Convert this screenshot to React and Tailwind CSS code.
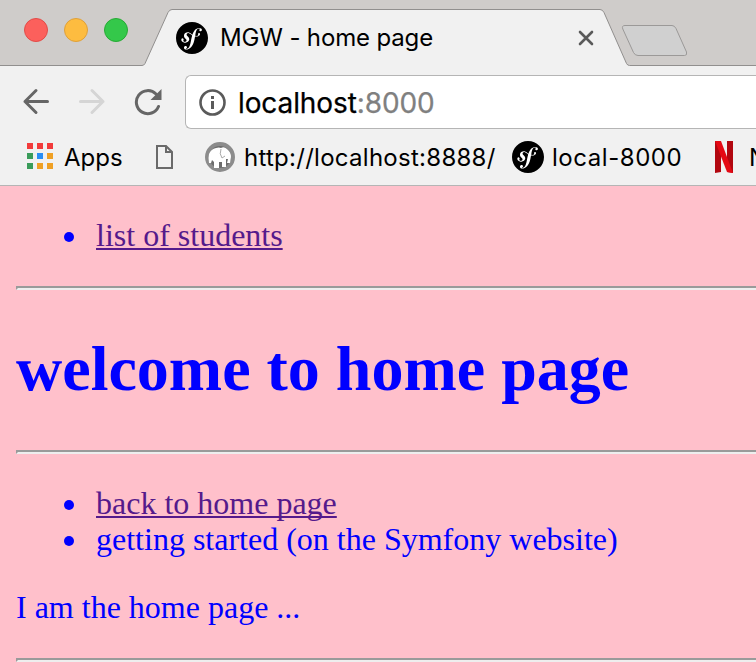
import React from 'react';
import { SiSymfony } from 'react-icons/si';

const appColors = [
  'bg-[#f23b3b]', 'bg-[#f23b3b]', 'bg-[#f23b3b]',
  'bg-[#3a9c5a]', 'bg-[#2a8ef5]', 'bg-[#efa024]',
  'bg-[#3a9c5a]', 'bg-[#efa024]', 'bg-[#efa024]',
];

function SymfonyIcon() {
  return (
    <span className="flex size-8 shrink-0 rounded-full bg-[radial-gradient(circle,white_60%,transparent_61%)]">
      <SiSymfony className="size-8 text-black" />
    </span>
  );
}

function TabStrip() {
  return (
    <header className="relative h-[66px] bg-[#cfccca]">
      <svg className="absolute inset-0" width="756" height="66" viewBox="0 0 756 66" fill="none">
        <path
          d="M-2 65.5H142Q144 65.5 145 63.5L168 12.5Q169.500 9.500 172 9.500H600Q602.500 9.500 604 12.500L626.500 63.500Q627.500 65.500 629.500 65.500H758V68H-2Z"
          fill="#f1f1f1" stroke="#918f8e"
        />
        <path
          d="M625 25.500H672Q674.500 25.500 676 28.500L686.500 52Q687.500 55.500 684.500 55.500H638Q635 55.500 633.500 52.500L622.800 29Q621.500 25.500 625 25.500Z"
          fill="#d0d0d0" stroke="#9b9998"
        />
      </svg>
      <div className="relative flex h-full">
        <div className="flex gap-4 pl-6 pt-[18px]">
          <span className="size-6 rounded-full border border-[#e24b48] bg-[#fc605c]" />
          <span className="size-6 rounded-full border border-[#dfa03a] bg-[#fdbc40]" />
          <span className="size-6 rounded-full border border-[#27aa35] bg-[#34c84a]" />
        </div>
        <div className="ml-12 flex w-[420px] items-center pt-[10px]">
          <SymfonyIcon />
          <span className="ml-3 w-[340px] whitespace-nowrap text-[24px] leading-8 tracking-[-0.15px]">MGW - home page</span>
          <svg className="ml-[18px] shrink-0" width="16" height="16" viewBox="0 0 16 16" fill="none" stroke="#5a5a5a" strokeWidth="2.600" strokeLinecap="round">
            <path d="M2 2L14 14M14 2L2 14" />
          </svg>
        </div>
      </div>
    </header>
  );
}

function Toolbar() {
  return (
    <div className="flex h-[63px] items-center pt-[9px]">
      <svg className="ml-[22px] shrink-0" width="28" height="28" viewBox="0 0 28 28" fill="none" stroke="#666" strokeWidth="3" strokeLinecap="round" strokeLinejoin="round">
        <path d="M25.500 13.500H3M14 2.500L3 13.500L14 24.500" />
      </svg>
      <svg className="ml-7 shrink-0" width="28" height="28" viewBox="0 0 28 28" fill="none" stroke="#d5d5d5" strokeWidth="3" strokeLinecap="round" strokeLinejoin="round">
        <path d="M2.500 13.500H25M14 2.500L25 13.500L14 24.500" />
      </svg>
      <svg className="ml-7 shrink-0" width="30" height="30" viewBox="0 0 30 30" fill="none">
        <path d="M22 7A11.500 11.500 0 1 0 24.500 19.500" stroke="#666" strokeWidth="3" strokeLinecap="round" />
        <path d="M27.500 2V13H16.500Z" fill="#666" />
      </svg>
      <div className="ml-[21px] flex h-[54px] flex-1 items-center rounded-l-md border border-r-0 border-[#b5b5b5] bg-white pl-[13px]">
        <svg className="shrink-0" width="28" height="28" viewBox="0 0 28 28" fill="none">
          <circle cx="13.500" cy="14.500" r="12" stroke="#5a5a5a" strokeWidth="2.600" />
          <path d="M12 8h3v3h-3zM12 13h3v8h-3z" fill="#5a5a5a" />
        </svg>
        <span className="ml-[11px] mt-[2px] whitespace-nowrap text-[28px] leading-9 tracking-[-0.1px] [-webkit-text-stroke:0.25px]">
          localhost<span className="text-[#808080]">:8000</span>
        </span>
      </div>
    </div>
  );
}

function BookmarksBar() {
  return (
    <div className="flex h-[57px] items-center overflow-hidden border-b border-[#b5b5b5] whitespace-nowrap text-[24px] leading-8">
      <span className="ml-[27px] grid shrink-0 grid-cols-3 gap-1 -mt-[2px]">
        {appColors.map((color, i) => (
          <span key={i} className={`size-[6px] ${color}`} />
        ))}
      </span>
      <span className="ml-[11px] mt-[2px] w-[59px] shrink-0">Apps</span>
      <svg className="ml-8 shrink-0" width="18" height="26" viewBox="0 0 18 26" fill="none" stroke="#6a6a6a" strokeWidth="2">
        <path d="M2 2H11L17 8V24H2ZM11 2V8H17" />
      </svg>
      <svg className="ml-[31px] shrink-0" width="32" height="32" viewBox="0 0 32 32">
        <circle cx="16" cy="16" r="13" fill="#6c6c6c" stroke="#8c8c8c" strokeWidth="4" />
        <path d="M5 13Q7 8 12 7Q15 6 17 7Q20 5 23 8Q27 11 27 16L26 22H23L24 18L22 18V26H18V21H15V27H10V21L8 19L7 22H5Q4 17 5 13Z" fill="white" />
        <path d="M17 8Q15 13 18 17L21 15" fill="none" stroke="#aaa" strokeWidth="1" />
      </svg>
      <span className="ml-2 mt-[2px] w-[252px] shrink-0 tracking-[0.27px]">http://localhost:8888/</span>
      <span className="ml-4 flex shrink-0"><SymfonyIcon /></span>
      <span className="ml-2 mt-[2px] w-[130px] shrink-0 tracking-[0.55px]">local-8000</span>
      <svg className="ml-[33px] shrink-0" width="18" height="32" viewBox="0 0 18 32">
        <path d="M0 0H6V31L0 32ZM12 0H18V32L12 31Z" fill="#b20710" />
        <path d="M0 0H6L18 32L12 31Z" fill="#e50914" />
      </svg>
      <span className="ml-4 mt-[2px] shrink-0">N</span>
    </div>
  );
}

function ListItem({ children }) {
  return (
    <li className="flex h-9 items-center pl-12">
      <span className="mr-[22px] mt-[2px] size-[10px] rounded-full bg-[#0000ff]" />
      <span className="-mt-[2px]">{children}</span>
    </li>
  );
}

function Rule() {
  return <hr className="h-1 border-2 border-r-0 border-t-[#9a9a9a] border-b-[#eeeeee] border-l-[#9a9a9a]" />;
}

const linkClass =
  'text-[#551a8b] underline decoration-2 underline-offset-[2px] [text-decoration-skip-ink:none]';

export default function App() {
  return (
    <div className="h-[662px] w-[756px] overflow-hidden bg-[#f1f1f1] font-['Inter','Liberation_Sans',sans-serif] text-black">
      <TabStrip />
      <Toolbar />
      <BookmarksBar />
      <main className="h-[476px] overflow-hidden bg-[#ffc0cb] pl-4 pt-8 font-['Liberation_Serif',serif] text-[32px] leading-9 text-[#0000ff]">
        <ul className="mb-8">
          <ListItem><a className={linkClass}>list of students</a></ListItem>
        </ul>
        <Rule />
        <h1 className="mt-[42px] mb-[44px] text-[64px] leading-[74px] font-bold">welcome to home page</h1>
        <Rule />
        <ul className="my-8">
          <ListItem><a className={linkClass}>back to home page</a></ListItem>
          <ListItem>getting started (on the Symfony website)</ListItem>
        </ul>
        <p className="-mt-px mb-[33px]">I am the home page ...</p>
        <Rule />
      </main>
    </div>
  );
}
